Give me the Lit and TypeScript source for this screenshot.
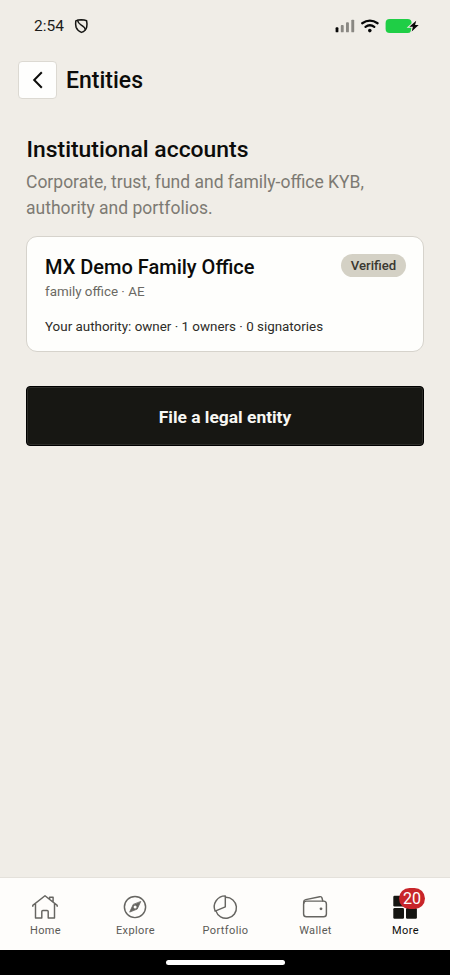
import { LitElement, html, svg, css } from "lit";
import { customElement, property } from "lit/decorators.js";

const icons: Record<string, unknown> = {
  home: svg`<path d="M1.8 13.2v-.8L14 2.8l12.2 9.6v.8M4.5 11v13.9h6.3v-6.4q0-1.1 1.1-1.1h4.2q1.1 0 1.1 1.1v6.4h6.3V11M18.6 6V4.3h3.5v4.6"/>`,
  explore: svg`<circle cx="14" cy="14" r="10.6"/><path d="M19.6 8.8l-3.4 7.3-7.5 3 3.4-7.4z" fill="#666561" stroke-width=".8"/><circle cx="14.1" cy="14" r="1.5" fill="#fefdfa" stroke="none"/>`,
  portfolio: svg`<path d="M14.3 2.9v10.9L4.1 18.1A11 11 0 0 1 14.3 2.9z"/><path d="M14.8 4.3a10.5 10.5 0 1 1-9.9 13.6"/>`,
  wallet: svg`<rect x="2.6" y="8.1" width="22.8" height="15.7" rx="2.8"/><path d="M2.7 10.3V9q0-2 2-2.4l14-2.9q1.9-.4 2.3 1.3l.8 3.1"/><circle cx="20" cy="15.8" r="1.4" fill="#666561" stroke="none"/>`,
  more: svg`<g fill="#151511" stroke="none"><rect x="2.3" y="2.7" width="10.7" height="10.7" rx="1.2"/><rect x="15" y="2.7" width="10.9" height="10.7" rx="1.2"/><rect x="2.3" y="15" width="10.7" height="10.8" rx="1.2"/><rect x="15" y="15" width="10.9" height="10.8" rx="1.2"/></g>`,
};

@customElement("tab-item")
class TabItem extends LitElement {
  @property() icon = "home";
  @property() label = "";
  @property() badge = "";
  @property({ type: Boolean, reflect: true }) active = false;

  static styles = css`
    :host { flex: 1; display: flex; flex-direction: column; align-items: center; padding-top: 15px; color: #5b5a56; }
    :host([active]) { color: #0c0c0a; }
    .icon { position: relative; width: 28px; height: 28px; }
    svg { display: block; fill: none; stroke: #666561; stroke-width: 1.45; stroke-linejoin: round; stroke-linecap: round; }
    .label { margin-top: 3px; padding-left: 1px; font-size: 11px; line-height: 14px; letter-spacing: 0.4px; font-weight: 400; white-space: nowrap; }
    .badge { position: absolute; left: 8px; top: -5px; width: 26px; height: 21px; border-radius: 11px; background: #c8252a; color: #fff; font-size: 16px; line-height: 21px; text-align: center; }
  `;

  render() {
    return html`
      <div class="icon">
        <svg width="28" height="28" viewBox="0 0 28 28">${icons[this.icon]}</svg>
        ${this.badge ? html`<span class="badge">${this.badge}</span>` : ""}
      </div>
      <span class="label">${this.label}</span>
    `;
  }
}

@customElement("app-root")
class AppRoot extends LitElement {
  static styles = css`
    :host { display: flex; flex-direction: column; height: 975px; width: 450px; background: #f0ede7; color: #0c0c0a; font-family: Roboto, sans-serif; overflow: hidden; }
    * { box-sizing: border-box; }
    h1, h2, h3, p { margin: 0; font-weight: 500; white-space: nowrap; }
    svg { display: block; }
    .status { height: 61px; padding: 16px 30px 0 34px; display: flex; align-items: flex-start; }
    .time { font-size: 15.5px; line-height: 20px; color: #1c1c1a; width: 40px; }
    .shield { margin-top: 2px; }
    .signals { margin-left: auto; }
    .header { display: flex; align-items: center; height: 38px; padding-left: 18px; gap: 9px; }
    .back { width: 39px; height: 38px; padding: 0; background: #fefefd; border: 1px solid #dcd9d2; border-radius: 4px; display: grid; place-items: center; }
    h1 { font-size: 23px; line-height: 30px; padding-top: 2px; }
    main { flex: 1; padding: 35px 26px 0; }
    h2 { font-size: 22.9px; line-height: 32px; padding-left: 0.5px; }
    .intro { font-size: 17.5px; line-height: 26px; font-weight: 400; color: #7d7a73; margin-top: 3px; }
    .card { margin-top: 15px; height: 116px; background: #fefefc; border: 1px solid #d6d3cc; border-radius: 11px; padding: 17px 17px 0 18px; }
    .top { display: flex; justify-content: space-between; align-items: flex-start; }
    h3 { font-size: 20px; line-height: 27px; }
    .pill { height: 23px; width: 65px; border-radius: 12px; background: #d4d1c5; color: #3a3831; font-size: 13.2px; line-height: 24px; font-weight: 500; text-align: center; }
    .kind { font-size: 13.4px; line-height: 18px; font-weight: 400; color: #6b6963; margin-top: 2px; }
    .authority { font-size: 13.4px; line-height: 18px; font-weight: 400; color: #2d2c28; margin-top: 16.5px; }
    .file { display: block; margin-top: 34px; width: 100%; height: 60px; padding: 2px 0 0; border: 1px solid #000; border-radius: 4px; background: #171713; box-shadow: inset 0 0 0 1px #2d2d29; color: #f8f7f3; font: 700 17.4px/24px Roboto, sans-serif; }
    nav { height: 73px; display: flex; background: #fefdfb; border-top: 1px solid #e4e1db; }
    .gesture { height: 25px; background: #000; padding-top: 9.5px; }
    .handle { width: 119px; height: 5px; border-radius: 3px; background: #fff; margin: 0 auto; }
  `;

  render() {
    return html`
      <div class="status">
        <span class="time">2:54</span>
        <svg class="shield" width="16" height="17" viewBox="0 0 16 17" fill="none" stroke="#151513" stroke-width="1.5" stroke-linejoin="round" stroke-linecap="round">
          <path d="M7.2 1.8q3.3 0 5.4.9.7 3.3.1 6.4-.9 3.9-5.3 5.3-4-1.5-5.3-5.1Q1.3 6 1.8 2.9 4 1.9 7.2 1.8z"/>
          <path d="M3.6 2.6Q4.2 5 7 6.9q3.8 2.2 4.3 4.8"/>
        </svg>
        <svg class="signals" width="86" height="20" viewBox="0 0 86 20">
          <rect x="1.6" y="11.3" width="2.8" height="5" rx=".9" fill="#080808"/>
          <rect x="6.8" y="9" width="2.9" height="7.3" rx=".9" fill="#8a8883"/>
          <rect x="12" y="6.3" width="2.9" height="10" rx=".9" fill="#8a8883"/>
          <rect x="17.3" y="3.7" width="2.9" height="12.6" rx=".9" fill="#8a8883"/>
          <g fill="none" stroke="#080808" stroke-width="2.3" stroke-linecap="round"><path d="M28.2 7.2q7.7-5.3 15.4 0M31.5 10.9q4.4-3.4 8.8 0"/></g>
          <circle cx="35.8" cy="14.6" r="1.8" fill="#080808"/>
          <rect x="51.6" y="3" width="26" height="14" rx="4" fill="#1fce46"/>
          <path d="M82.2 4.7l-6.9 6.1h3.6l-1.2 4.6 7-6.3h-3.6z" fill="#080808" stroke="#f0ede7" stroke-width="2" paint-order="stroke"/>
        </svg>
      </div>
      <div class="header">
        <button class="back" aria-label="Back">
          <svg width="20" height="20" viewBox="0 0 20 20" fill="none" stroke="#0c0c0a" stroke-width="2"><path d="M13.8 2.3L6.2 10l7.6 7.7"/></svg>
        </button>
        <h1>Entities</h1>
      </div>
      <main>
        <h2>Institutional accounts</h2>
        <p class="intro">Corporate, trust, fund and family-office KYB,<br />authority and portfolios.</p>
        <section class="card">
          <div class="top"><h3>MX Demo Family Office</h3><span class="pill">Verified</span></div>
          <p class="kind">family office · AE</p>
          <p class="authority">Your authority: owner · 1 owners · 0 signatories</p>
        </section>
        <button class="file">File a legal entity</button>
      </main>
      <nav>
        <tab-item icon="home" label="Home"></tab-item>
        <tab-item icon="explore" label="Explore"></tab-item>
        <tab-item icon="portfolio" label="Portfolio"></tab-item>
        <tab-item icon="wallet" label="Wallet"></tab-item>
        <tab-item icon="more" label="More" badge="20" active></tab-item>
      </nav>
      <div class="gesture"><div class="handle"></div></div>
    `;
  }
}
